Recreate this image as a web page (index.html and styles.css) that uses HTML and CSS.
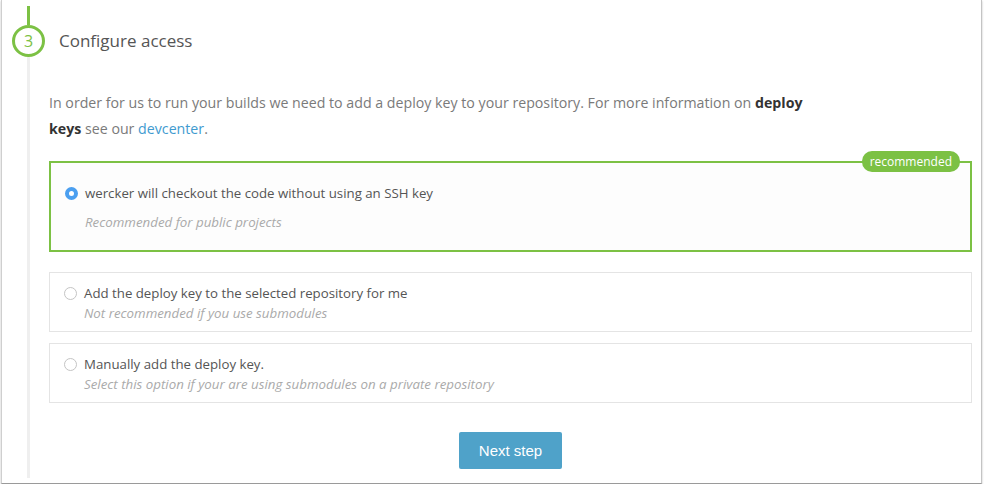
FILE: index.html
```html
<!DOCTYPE html>
<html lang="en">
<head>
<meta charset="utf-8">
<title>Configure access</title>
<link rel="stylesheet" href="styles.css">
</head>
<body>
<div class="window">
  <div class="step">
    <div class="rail-head">
      <div class="rail-line green"></div>
      <div class="step-num">3</div>
    </div>
    <div class="step-title-cell">
      <h2 class="step-title">Configure access</h2>
    </div>
    <div class="rail-body">
      <div class="rail-line grey"></div>
    </div>
    <div class="step-content">
      <p class="intro">In order for us to run your builds we need to add a deploy key to your repository. For more information on <strong>deploy keys</strong> see our <a href="#" class="link">devcenter</a>.</p>

      <label class="option selected">
        <span class="badge">recommended</span>
        <span class="option-main"><span class="radio checked"></span><span class="option-label">wercker will checkout the code without using an SSH key</span></span>
        <span class="option-sub">Recommended for public projects</span>
      </label>

      <label class="option">
        <span class="option-main"><span class="radio"></span><span class="option-label">Add the deploy key to the selected repository for me</span></span>
        <span class="option-sub">Not recommended if you use submodules</span>
      </label>

      <label class="option">
        <span class="option-main"><span class="radio"></span><span class="option-label">Manually add the deploy key.</span></span>
        <span class="option-sub">Select this option if your are using submodules on a private repository</span>
      </label>

      <div class="actions">
        <button class="btn-next" type="button">Next step</button>
      </div>
    </div>
  </div>
</div>
</body>
</html>
```

FILE: styles.css
```css
* { box-sizing: border-box; }

html, body {
  margin: 0;
  padding: 0;
  background: #ffffff;
}

body {
  font-family: "Open Sans", "DejaVu Sans", sans-serif;
  color: #555;
}

.window {
  margin-left: 1px;
  width: 981px;
  height: 484px;
  background: #fff;
  border-left: 1px solid #cfcfcf;
  border-right: 1px solid #c4c4c4;
  border-bottom: 1px solid #9a9a9a;
  box-shadow: 0 1px 2px rgba(0,0,0,0.25);
  padding-top: 6px;
}

.step {
  display: grid;
  grid-template-columns: 47px 1fr;
  grid-template-rows: auto 1fr;
  height: 472px;
}

.rail-head {
  width: 33px;
  margin-left: 10px;
  display: flex;
  flex-direction: column;
  align-items: center;
}

.rail-line {
  width: 3px;
}

.rail-line.green {
  height: 19px;
  background: #7cc144;
}

.rail-line.grey {
  height: 100%;
  background: #efefef;
}

.step-num {
  width: 33px;
  height: 32px;
  border: 3px solid #7cc144;
  border-radius: 50%;
  display: flex;
  align-items: center;
  justify-content: center;
  color: #7cc144;
  font-size: 16px;
  line-height: 1;
}

.step-title-cell {
  display: flex;
  align-items: flex-end;
  padding-left: 10px;
}

.step-title {
  margin: 0;
  font-size: 17px;
  font-weight: 400;
  line-height: 32px;
  color: #555;
}

.rail-body {
  width: 33px;
  margin-left: 10px;
  display: flex;
  justify-content: center;
}

.step-content {
  padding-right: 9px;
  display: flex;
  flex-direction: column;
}

.intro {
  margin: 33px 0 19px;
  max-width: 775px;
  font-size: 14.2px;
  line-height: 26px;
  color: #7a7a7a;
}

.intro strong {
  color: #333;
  font-weight: 700;
}

.link {
  color: #3f9bd0;
  text-decoration: none;
}

.option {
  position: relative;
  display: flex;
  flex-direction: column;
  border: 1px solid #e4e4e4;
  background: #fff;
  padding: 10px 14px 8px;
  margin-bottom: 11px;
  font-size: 13.25px;
  line-height: 20px;
}

.option.selected {
  border: 2px solid #7cc144;
  background: #fdfdfd;
  padding: 20px 14px 18px;
  margin-bottom: 20px;
}

.option-main {
  display: flex;
  align-items: center;
  color: #555;
}

.radio {
  width: 13px;
  height: 13px;
  border: 1px solid #c4c4c4;
  border-radius: 50%;
  background: #fff;
  margin-right: 7px;
  flex: none;
}

.radio.checked {
  border: 4px solid #4b9ff0;
  background: #fff;
  margin-right: 7px;
}

.option-sub {
  padding-left: 20px;
  font-style: italic;
  color: #aaa;
  font-size: 13.3px;
}

.option.selected .option-sub {
  margin-top: 9px;
}

.badge {
  position: absolute;
  top: -12px;
  right: 10px;
  height: 21px;
  padding: 0 8px;
  border-radius: 10px;
  background: #7cc144;
  color: #fff;
  font-size: 12px;
  line-height: 21px;
}

.actions {
  display: flex;
  justify-content: center;
  margin-top: 18px;
}

.btn-next {
  width: 103px;
  height: 37px;
  border: none;
  border-radius: 2px;
  background: #4fa2c9;
  color: #fff;
  font-family: "Liberation Sans", Arial, sans-serif;
  font-size: 15px;
  padding: 0;
}
```
